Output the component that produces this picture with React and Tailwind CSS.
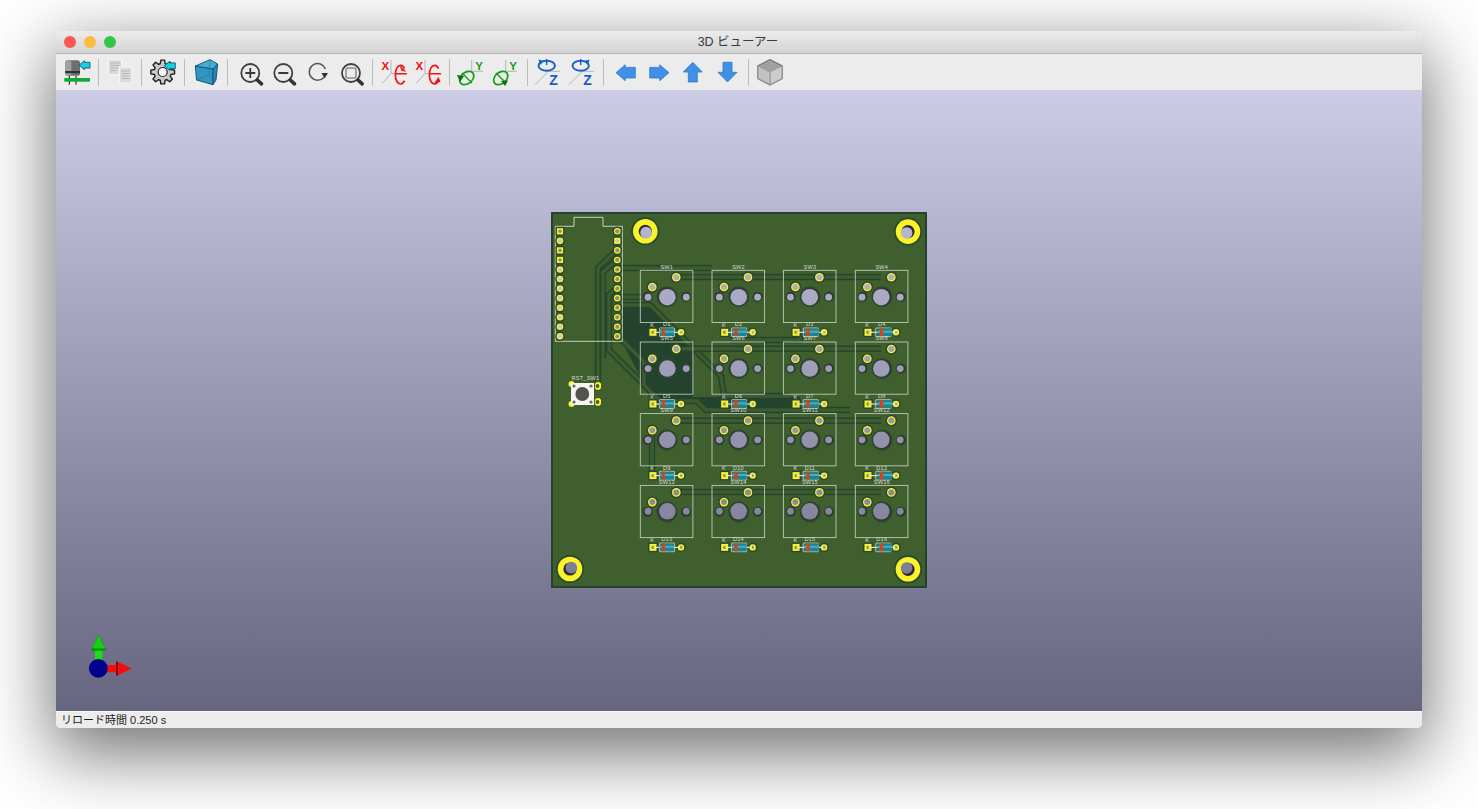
import React from "react";

const BOARD = "#3f5f2e";
const DARK = "#23432f";
const SILK = "#d6dcd2";
const YEL = "#f8f32a";
const COLX = [640.3, 712, 783.4, 855.3];
const ROWY = [270.3, 342, 413.6, 485.4];
const CX = 739, CY = 400;

function Hole({ x, y, r }) {
  const dx = (CX - x) * 0.008, dy = (CY - y) * 0.008;
  return (
    <g>
      <circle cx={x} cy={y} r={r} fill="#3a2f33" />
      <circle cx={x + dx * 0.6} cy={y + dy * 0.6} r={r - 0.5} fill="url(#hole)" />
    </g>
  );
}

function Trace({ d }) {
  return (
    <g fill="none" strokeLinejoin="round">
      <polyline points={d} stroke="#24452d" strokeWidth="6.4" />
      <polyline points={d} stroke="#3c5b2e" strokeWidth="3.4" />
    </g>
  );
}

function RoundPad({ x, y, r = 3.5, h = 2, hole = "url(#hole)" }) {
  return (
    <g>
      <circle cx={x} cy={y} r={r + 1.5} fill="#29482f" />
      <circle cx={x} cy={y} r={r} fill={YEL} />
      <circle cx={x} cy={y} r={h} fill={hole} />
    </g>
  );
}

function SquarePad({ x, y, s = 3.5, h = 1.7, hole = "#8a8873" }) {
  return (
    <g>
      <rect x={x - s - 1.3} y={y - s - 1.3} width={2 * s + 2.6} height={2 * s + 2.6} fill="#29482f" />
      <rect x={x - s} y={y - s} width={2 * s} height={2 * s} fill={YEL} />
      <circle cx={x} cy={y} r={h} fill={hole} />
    </g>
  );
}

function Label({ x, y, children }) {
  return (
    <text x={x} y={y} fontSize="5.6" textAnchor="middle" fill={SILK} fontFamily="'Liberation Sans', sans-serif" letterSpacing="0.2">
      {children}
    </text>
  );
}

function SwitchCell({ x, y, n, col }) {
  const off = [0, 1, 1.7, 3.2][col];
  return (
    <g>
      <circle cx={x + 26.7} cy={y + 26.4} r="10.5" fill="#29482f" />
      <circle cx={x + 7.3} cy={y + 26.4} r="5.2" fill="#29482f" />
      <circle cx={x + 45.7} cy={y + 26.4} r="5.2" fill="#29482f" />
      <Hole x={x + 26.7} y={y + 26.4} r={8.8} />
      <Hole x={x + 7.3} y={y + 26.4} r={3.9} />
      <Hole x={x + 45.7} y={y + 26.4} r={3.9} />
      <RoundPad x={x + 36} y={y + 7} r={4.3} h={3} />
      <RoundPad x={x + 12} y={y + 16.7} r={4.3} h={3} />
      <rect x={x} y={y} width="52.6" height="52.2" fill="none" stroke={SILK} strokeWidth="0.9" opacity="0.85" />
      <Label x={x + 26.5} y={y - 1.6}>{`SW${n}`}</Label>
      <Label x={x + 12} y={y + 56.8}>K</Label>
      <Label x={x + 26.5} y={y + 56}>{`D${n}`}</Label>
      <SquarePad x={x + 12.7} y={y + 62} />
      <RoundPad x={x + 40.7} y={y + 62} r={3.2} h={1.4} />
      <line x1={x + 13} y1={y + 62} x2={x + 40} y2={y + 62} stroke="#e8ebe4" strokeWidth="1.1" />
      <rect x={x + 19.2 + off * 0.4} y={y + 57.7} width="15" height="8.6" rx="0.5" fill="none" stroke={SILK} strokeWidth="0.8" />
      <rect x={x + 19.4 + off} y={y + 58.2} width="14.4" height="7.6" rx="1.6" fill="#1a8597" />
      <rect x={x + 19.4 + off} y={y + 60.4} width="14.4" height="2" fill="#5bbcc8" opacity="0.75" />
      <rect x={x + 21.4 + off} y={y + 58.2} width="3.2" height="7.6" fill="#d4431c" />
    </g>
  );
}

function Mount({ x, y }) {
  const dx = (CX - x) * 0.008, dy = (CY - y) * 0.008;
  return (
    <g>
      <circle cx={x} cy={y} r="14" fill="#29482f" />
      <circle cx={x} cy={y} r="12.3" fill={YEL} />
      <circle cx={x} cy={y} r="6.6" fill="#2c2a2c" />
      <circle cx={x + dx} cy={y + dy} r="5.8" fill="url(#hole)" />
    </g>
  );
}

function Board() {
  const cells = [];
  ROWY.forEach((y, r) =>
    COLX.forEach((x, c) => cells.push(<SwitchCell key={`${r}-${c}`} x={x} y={y} n={r * 4 + c + 1} col={c} />))
  );
  const pads = Array.from({ length: 12 }, (_, i) => 231.3 + i * 9.55);
  return (
    <svg width="376" height="376" viewBox="551 212 376 376" className="block shrink-0">
      <defs>
        <linearGradient id="hole" gradientUnits="userSpaceOnUse" x1="0" y1="90" x2="0" y2="711">
          <stop offset="0" stopColor="#ccccE6" />
          <stop offset="1" stopColor="#666680" />
        </linearGradient>
      </defs>
      <rect x="552" y="213" width="374" height="374" fill={BOARD} stroke={DARK} strokeWidth="2" />
      <polygon points="622,307 648,307 693,351 693,397 800,397 800,408 702,408 692,399 650,399 641,378 622,342" fill={DARK} />
      <Trace d="617,250 598,268 598,385" />
      <Trace d="617,288 609,295 609,350 660,401 697,401 706,410 850,410" />
      <Trace d="617,260 603,272 603,340 603,358" />
      <Trace d="622,305 650,305 721,376 724,396 790,396" />
      <Trace d="622,340 644,362 644,384" />
      <Trace d="618,268 712,268" />
      <Trace d="618,297 642,297" />
      <Trace d="676,277 881,277" />
      <Trace d="676,348.7 881,348.7" />
      <Trace d="676,420.8 881,420.8" />
      <Trace d="676,492 881,492" />
      <Trace d="652,430 652,473" />
      <Trace d="800,333 800,340 730,340" />
      {cells}
      <polyline points="555.3,226.3 574,226.3 574,217.3 603,217.3 603,226.3 622.3,226.3 622.3,341.3 555.3,341.3 555.3,226.3" fill="none" stroke={SILK} strokeWidth="0.9" />
      {pads.map((y, i) =>
        i === 0 || i === 2 || i === 3 ? (
          <SquarePad key={`l${i}`} x={560} y={y} s={3.1} h={1.8} hole="#8f8e7c" />
        ) : (
          <RoundPad key={`l${i}`} x={560} y={y} r={3.3} h={2.1} hole="#c6c5d2" />
        )
      )}
      {pads.map((y, i) =>
        i === 1 ? (
          <SquarePad key={`r${i}`} x={617.3} y={y} s={3.1} h={1.8} hole="#c6c5d2" />
        ) : (
          <RoundPad key={`r${i}`} x={617.3} y={y} r={3.3} h={2.1} hole="#8f8e7c" />
        )
      )}
      <Mount x={645.3} y={231.3} />
      <Mount x={908} y={231.6} />
      <Mount x={570} y={569} />
      <Mount x={908} y={569.3} />
      <Label x={585.5} y={380}>RST_SW1</Label>
      <ellipse cx="598" cy="386" rx="3.8" ry="4.4" fill={YEL} stroke="#29482f" />
      <ellipse cx="598" cy="402" rx="3.8" ry="4.4" fill={YEL} stroke="#29482f" />
      <circle cx="597.5" cy="386" r="1.9" fill="#4c5c40" />
      <circle cx="597.5" cy="402" r="1.9" fill="#4c5c40" />
      <circle cx="571.5" cy="384" r="3" fill={YEL} />
      <circle cx="571.5" cy="404" r="3" fill={YEL} />
      <rect x="571" y="383" width="23" height="22" fill="#f4f4f0" />
      <circle cx="582.3" cy="394" r="6.9" fill="#545250" />
      <circle cx="574" cy="386" r="1.6" fill="#6a6a66" />
      <circle cx="591" cy="386" r="1.6" fill="#6a6a66" />
      <circle cx="574" cy="402" r="1.6" fill="#6a6a66" />
      <circle cx="591" cy="402" r="1.6" fill="#6a6a66" />
    </svg>
  );
}

function Cell({ children, className = "w-[34px]" }) {
  return (
    <div className={`${className} h-[36px] shrink-0`}>
      <svg width="34" height="36" viewBox="0 0 34 36" className="block overflow-visible">
        {children}
      </svg>
    </div>
  );
}

function Sep({ className }) {
  return <div className={`w-px h-[27px] bg-[#bcbcbc] shrink-0 ${className}`} />;
}

const CyanArrow = ({ x = 19, y = 6.7 }) => (
  <polygon
    transform={`translate(${x} ${y})`}
    points="0,4.5 5.4,0 5.4,1.6 11,1.6 11,7.4 5.4,7.4 5.4,9"
    fill="#12d0e6"
    stroke="#0a4854"
    strokeWidth="0.8"
  />
);

function gearPath(cx, cy, R, r, n) {
  const pts = [];
  for (let i = 0; i < n; i++) {
    const a = (i / n) * Math.PI * 2 - Math.PI / 2;
    const w = (Math.PI / n) * 0.5;
    [[-w * 1.5, r], [-w * 0.8, R], [w * 0.8, R], [w * 1.5, r]].forEach(([d, m]) =>
      pts.push(`${(cx + Math.cos(a + d) * m).toFixed(2)},${(cy + Math.sin(a + d) * m).toFixed(2)}`)
    );
  }
  return pts.join(" ");
}

const Magnifier = ({ cx, cy, children }) => (
  <g>
    <circle cx={cx} cy={cy} r="9" fill="none" stroke="#3f3f3f" strokeWidth="1.8" />
    <line x1={cx + 7} y1={cy + 7} x2={cx + 11.2} y2={cy + 10.8} stroke="#333" strokeWidth="3.6" strokeLinecap="round" />
    {children}
  </g>
);

const AxisText = ({ x, y, fill, size = 14, children }) => (
  <text x={x} y={y} fontSize={size} fontWeight="700" textAnchor="middle" fill={fill} fontFamily="'Liberation Sans', sans-serif">
    {children}
  </text>
);

function RotX({ flip }) {
  const ex = 24.5, ey = 20.7;
  return (
    <g>
      <polyline points="6,29.5 15,19.5 15,6" fill="none" stroke="#b4b4b4" strokeWidth="1" />
      <line x1="15" y1="19.5" x2="31" y2="19.5" stroke="#b4b4b4" strokeWidth="1" />
      <AxisText x={9.3} y={15.8} fill="#f01010" size={11.5}>X</AxisText>
      <path d={`M${ex + 4} ${ey - 6} A5.2 9.3 0 1 0 ${ex + 4} ${ey + 6}`} fill="none" stroke="#ee1414" strokeWidth="1.7" />
      <line x1="19" y1="19.7" x2="31" y2="19.7" stroke="#ee1414" strokeWidth="1.5" />
      <polygon points={flip ? `${ex + 6},${ey + 7} ${ex - 1},${ey + 9.5} ${ex + 4},${ey + 2}` : `${ex + 6},${ey - 3} ${ex - 1},${ey - 9.5} ${ex + 1},${ey - 4}`} fill="#ee1414" />
    </g>
  );
}

function RotY({ flip }) {
  return (
    <g>
      <polyline points="18.7,6 18.7,17.3" fill="none" stroke="#b4b4b4" strokeWidth="1" />
      <line x1="12" y1="17.3" x2="30" y2="17.3" stroke="#b4b4b4" strokeWidth="1" />
      <AxisText x={26} y={16} fill="#16a016" size={11.5}>Y</AxisText>
      <ellipse cx="13.7" cy="24" rx="8" ry="5.6" transform="rotate(-40 13.7 24)" fill="none" stroke="#14a014" strokeWidth="1.7" />
      <line x1="9" y1="19" x2="19" y2="29" stroke="#14a014" strokeWidth="1.4" />
      <polygon points={flip ? "14,27 21,26.5 18,32" : "4,21 11,22 7,28"} fill="#0c700c" />
    </g>
  );
}

function RotZ({ flip }) {
  return (
    <g>
      <polyline points="5,30.7 18.3,17.3 30,17.3" fill="none" stroke="#b4b4b4" strokeWidth="1" />
      <ellipse cx="16.7" cy="11.7" rx="8.2" ry="5" fill="none" stroke="#1560c8" strokeWidth="1.9" />
      <line x1="16.7" y1="5" x2="16.7" y2="11" stroke="#1560c8" strokeWidth="1.4" />
      <polygon points={flip ? "20,7 25.5,5.5 24,11" : "14,7 8.5,5.5 10,11"} fill="#1560c8" />
      <AxisText x={23.5} y={31} fill="#1560c8" size={14}>Z</AxisText>
    </g>
  );
}

const Arrow = ({ points }) => (
  <polygon points={points} fill="#3f90e6" stroke="#2f78cc" strokeWidth="0.8" strokeLinejoin="round" />
);

function Toolbar() {
  return (
    <div className="flex items-center h-[36px] pl-[4px] bg-[#ececec] shrink-0">
      <Cell>
        <rect x="5.3" y="6.3" width="14.7" height="15.4" rx="2.5" fill="#6f6f6f" />
        <rect x="5.3" y="6.3" width="6" height="15.4" rx="2" fill="#a0a0a0" />
        <rect x="5.3" y="17" width="14.7" height="2.2" fill="#303030" />
        <CyanArrow x={19} y={6.7} />
        <line x1="9.3" y1="21.7" x2="9.3" y2="30.7" stroke="#111" strokeWidth="1" />
        <line x1="16" y1="21.7" x2="16" y2="30.7" stroke="#111" strokeWidth="1" />
        <rect x="4.3" y="24" width="25.7" height="3.7" fill="#10a83a" />
      </Cell>
      <Sep className="ml-[4px] mr-[4px]" />
      <Cell>
        <rect x="5.3" y="5.7" width="13.4" height="15" fill="#d8d8d8" stroke="#f6f6f6" strokeWidth="1.2" />
        <path d="M7.5 9h9M7.5 11.5h9M7.5 14h9M7.5 16.5h5" stroke="#b5b5b5" strokeWidth="1" />
        <rect x="16.3" y="13" width="12.7" height="16" fill="#dcdcdc" stroke="#f6f6f6" strokeWidth="1.2" />
        <path d="M18.5 17h8M18.5 19.5h8M18.5 22h8M18.5 24.5h8" stroke="#b5b5b5" strokeWidth="1" />
      </Cell>
      <Sep className="ml-[4px] mr-[4px]" />
      <Cell>
        <polygon points={gearPath(16.7, 18, 12, 8.6, 8)} fill="#c9c9c9" stroke="#1e1e1e" strokeWidth="1.4" strokeLinejoin="round" />
        <circle cx="16.7" cy="18" r="4.5" fill="#f8f8f8" stroke="#222" strokeWidth="1.2" />
        <CyanArrow x={18.3} y={7.3} />
      </Cell>
      <Sep className="ml-[4px] mr-[4px]" />
      <Cell>
        <polygon points="6.3,12 24,15 24,30.7 7.5,26" fill="#2f97c2" stroke="#114e72" strokeWidth="0.9" strokeLinejoin="round" />
        <polygon points="6.3,12 21,5.7 28.7,10 24,15" fill="#46aed4" stroke="#114e72" strokeWidth="0.9" strokeLinejoin="round" />
        <polygon points="24,15 28.7,10 27,26 24,30.7" fill="#2689b2" stroke="#114e72" strokeWidth="0.9" strokeLinejoin="round" />
        <path d="M7.5 26 L20 21 L21 5.7 M20 21 L27 26" fill="none" stroke="#1c6f96" strokeWidth="0.6" />
      </Cell>
      <Sep className="ml-[4px] mr-[5px]" />
      <Cell>
        <Magnifier cx={17.3} cy={19}>
          <path d="M12.3 19h10M17.3 14v10" stroke="#3a3a3a" strokeWidth="1.8" />
        </Magnifier>
      </Cell>
      <Cell>
        <Magnifier cx={16.3} cy={19}>
          <path d="M11.3 19h10" stroke="#3a3a3a" strokeWidth="1.8" />
        </Magnifier>
      </Cell>
      <Cell>
        <path d="M22.8 23.4 A8.3 8.3 0 1 1 24.4 15" fill="none" stroke="#555" strokeWidth="1.5" />
        <polygon points="20.5,19 27,19 23.6,24.5" fill="#333" />
      </Cell>
      <Cell>
        <Magnifier cx={16} cy={19}>
          <rect x="11" y="14" width="10" height="10" rx="2" fill="none" stroke="#8a8a8a" strokeWidth="1.5" />
        </Magnifier>
      </Cell>
      <Sep className="ml-[3px] mr-[3px]" />
      <Cell>
        <RotX />
      </Cell>
      <Cell>
        <RotX flip />
      </Cell>
      <Sep className="ml-[5px] mr-[3px]" />
      <Cell>
        <RotY />
      </Cell>
      <Cell>
        <RotY flip />
      </Cell>
      <Sep className="ml-[6px] mr-[2px]" />
      <Cell>
        <RotZ />
      </Cell>
      <Cell>
        <RotZ flip />
      </Cell>
      <Sep className="ml-[5px] mr-[5px]" />
      <Cell className="w-[33.5px]">
        <Arrow points="7,18.7 16.3,10.7 16.3,13.4 26.3,13.4 26.3,24 16.3,24 16.3,26.7" />
      </Cell>
      <Cell className="w-[33.5px]">
        <Arrow points="26,18.7 16.7,10.7 16.7,13.4 6.7,13.4 6.7,24 16.7,24 16.7,26.7" />
      </Cell>
      <Cell className="w-[33.5px]">
        <Arrow points="16.8,8.3 26.3,18 21.3,18 21.3,28 12.3,28 12.3,18 7.3,18" />
      </Cell>
      <Cell className="w-[33.5px]">
        <Arrow points="17.5,28 27,18.3 22,18.3 22,8.3 13,8.3 13,18.3 8,18.3" />
      </Cell>
      <Sep className="ml-[5px] mr-[4px]" />
      <Cell>
        <polygon points="17,5.7 29,12 29,24.5 17,30.7 5,24.5 5,12" fill="#bdbdbd" stroke="#7d7d7d" strokeWidth="1.6" strokeLinejoin="round" />
        <polygon points="17,7 27.8,12.2 17,17.6 6.2,12.2" fill="#a0a0a0" />
        <polygon points="17,18 29,12 29,24.5 17,30.7" fill="#cdcdcd" stroke="#8a8a8a" strokeWidth="0.7" />
        <polygon points="17,18 5,12 5,24.5 17,30.7" fill="#c2c2c2" stroke="#8a8a8a" strokeWidth="0.7" />
      </Cell>
    </div>
  );
}

function Axes() {
  return (
    <svg width="50" height="50" viewBox="85 630 50 50" className="absolute left-[29px] top-[540px]">
      <rect x="95" y="649" width="7.4" height="12" fill="#16e016" />
      <polygon points="98.6,635 105.8,650 91.5,650" fill="#0fd40f" stroke="#0a8a0a" strokeWidth="0.4" />
      <rect x="91.5" y="648.5" width="14.3" height="2" fill="#0a8a0a" />
      <rect x="105" y="665" width="12" height="7.2" fill="#f01010" />
      <polygon points="132,668.5 117,661.6 117,675.6" fill="#f50c0c" />
      <rect x="116" y="661.5" width="2" height="14.2" fill="#8a0a0a" />
      <circle cx="98.3" cy="668.3" r="9.4" fill="#00008c" />
    </svg>
  );
}

export default function App() {
  const jp = { fontFamily: "'Liberation Sans', 'Noto Sans CJK JP', sans-serif" };
  return (
    <div className="h-[809px] w-full bg-white pt-[31px] px-[56px] overflow-hidden">
      <div className="h-[697px] flex flex-col rounded-[5px] overflow-hidden shadow-[0_22px_70px_4px_rgba(0,0,0,0.56)]">
        <div className="h-[23px] shrink-0 flex items-center relative bg-gradient-to-b from-[#ececec] to-[#d3d3d3] border-b border-[#b4b4b4]">
          <div className="flex items-center gap-[8px] pl-[8px]">
            <span className="w-[12px] h-[12px] rounded-full bg-[#fc5753]" />
            <span className="w-[12px] h-[12px] rounded-full bg-[#fdbc40]" />
            <span className="w-[12px] h-[12px] rounded-full bg-[#33c748]" />
          </div>
          <div className="flex-1 text-center text-[12.5px] leading-[23px] text-[#3a3a3a] pr-[62px]" style={jp}>
            3D ビューアー
          </div>
        </div>
        <Toolbar />
        <div className="flex-1 relative flex justify-center items-start pt-[122px] bg-gradient-to-b from-[#ccccE6] to-[#666680]">
          <Board />
          <Axes />
        </div>
        <div className="h-[17px] shrink-0 bg-[#ececec] border-t border-[#f8f8f8] flex items-center pl-[5px] text-[11px] text-[#1c1c1c]" style={jp}>
          リロード時間 0.250 s
        </div>
      </div>
    </div>
  );
}
